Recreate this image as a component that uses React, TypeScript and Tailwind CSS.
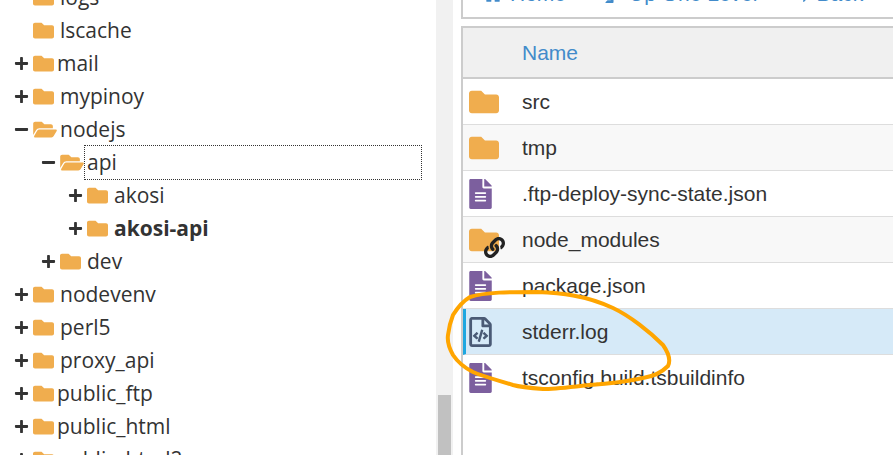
import React from 'react';
import { FaFolder, FaFolderOpen, FaPlus, FaMinus, FaFileAlt, FaRegFileCode, FaLink, FaHome, FaLevelUpAlt, FaReply } from 'react-icons/fa';

interface TreeRowProps {
  name: string;
  depth?: number;
  state?: 'open' | 'closed' | 'none';
  bold?: boolean;
  focused?: boolean;
  gap?: boolean;
}

const TreeRow: React.FC<TreeRowProps> = ({ name, depth = 0, state = 'closed', bold, focused, gap }) => {
  return (
    <div className="h-[33px] flex items-center" style={{ paddingLeft: 14 + depth * 27 }}>
      <span className="w-[19px] flex items-center text-[#333] shrink-0">
        {state === 'closed' && <FaPlus size={15} />}
        {state === 'open' && <FaMinus size={15} />}
      </span>
      {state === 'open' ? (
        <FaFolderOpen className="w-[24px] h-[21px] -mr-[3px] text-[#f0ad4e] shrink-0" />
      ) : (
        <FaFolder size={21} className="text-[#f0ad4e] shrink-0" />
      )}
      <span
        className={`ml-[3px] leading-[33px] whitespace-nowrap ${gap ? 'pl-[3px]' : ''} ${bold ? 'font-bold' : ''} ${
          focused ? 'h-[35px] w-[338px] border border-dotted border-[#333] pl-[2px]' : ''
        }`}
      >
        {name}
      </span>
    </div>
  );
};

const Tree = () => (
  <div className="w-[436px] shrink-0 -mt-[19px] font-['Open_Sans',sans-serif] text-[21px] text-[#333]">
    <TreeRow name="logs" state="none" gap />
    <TreeRow name="lscache" state="none" gap />
    <TreeRow name="mail" />
    <TreeRow name="mypinoy" gap />
    <TreeRow name="nodejs" state="open" gap />
    <TreeRow name="api" depth={1} state="open" focused />
    <TreeRow name="akosi" depth={2} gap />
    <TreeRow name="akosi-api" depth={2} gap bold />
    <TreeRow name="dev" depth={1} gap />
    <TreeRow name="nodevenv" gap />
    <TreeRow name="perl5" gap />
    <TreeRow name="proxy_api" gap />
    <TreeRow name="public_ftp" />
    <TreeRow name="public_html" />
    <TreeRow name="public_html2" />
  </div>
);

const rows = [
  { name: 'src', kind: 'folder' },
  { name: 'tmp', kind: 'folder', alt: true },
  { name: '.ftp-deploy-sync-state.json', kind: 'file' },
  { name: 'node_modules', kind: 'link', alt: true },
  { name: 'package.json', kind: 'file' },
  { name: 'stderr.log', kind: 'code', selected: true },
  { name: 'tsconfig.build.tsbuildinfo', kind: 'file', last: true },
];

const FileIcon = ({ kind }: { kind: string }) => {
  if (kind === 'file') return <FaFileAlt className="w-[23px] h-[30px] text-[#7c5f9e]" />;
  if (kind === 'code') return <FaRegFileCode className="w-[23px] h-[30px] text-[#4a5a75]" />;
  return (
    <span className="relative block">
      <FaFolder size={30} className="text-[#f0ad4e]" />
      {kind === 'link' && <FaLink size={21} className="absolute left-[15px] top-[12px] text-[#222]" />}
    </span>
  );
};

const App = () => {
  return (
    <div className="relative w-[893px] h-[455px] overflow-hidden bg-white flex">
      <Tree />
      <div className="w-[17px] shrink-0 bg-[#f1f1f1] flex flex-col justify-end px-[2px]">
        <div className="h-[60px] bg-[#c1c1c1]" />
      </div>
      <div className="flex-1 ml-[8px] font-['Liberation_Sans',sans-serif] text-[21px] text-[#333] min-w-0">
        <div className="h-[19px] border-l-2 border-b-2 border-[#ccc] overflow-hidden">
          <div className="flex items-center -mt-[18px] h-[24px] text-[#428bca] whitespace-nowrap">
            <FaHome size={20} className="ml-[20px]" />
            <span className="ml-[7px]">Home</span>
            <FaLevelUpAlt size={18} className="ml-[36px]" />
            <span className="ml-[9px]">Up One Level</span>
            <FaReply size={18} className="ml-[32px]" />
            <span className="ml-[9px]">Back</span>
          </div>
        </div>
        <div className="mt-[7px] border-l-2 border-[#ccc] h-[440px]">
          <div className="h-[53px] bg-[#f0f0f0] border-t-2 border-b-2 border-[#ccc] flex items-center pl-[59px] text-[#428bca]">
            Name
          </div>
          {rows.map((r) => (
            <div
              key={r.name}
              className={`h-[46px] flex items-center ${r.last ? '' : 'border-b border-[#ddd]'} ${
                r.selected ? 'bg-[#d6eaf8] border-l-[3px] border-l-[#1ea7e0] pl-[3px]' : r.alt ? 'bg-[#f8f8f8] pl-[6px]' : 'bg-white pl-[6px]'
              }`}
            >
              <span className="w-[53px] shrink-0"><FileIcon kind={r.kind} /></span>
              <span className="whitespace-nowrap">{r.name}</span>
            </div>
          ))}
        </div>
      </div>
      <svg className="absolute inset-0 pointer-events-none" width="893" height="455" fill="none">
        <path
          d="M470 297C485 292 510 292 537 292C560 293 585 295 613 308C630 316 650 332 663 345C670 355 670 362 668 366C660 374 650 377 643 378C625 382 605 384 590 385C570 387 555 389 543 389C530 388 520 387 513 385C497 380 485 377 473 372C463 367 457 361 453 355C449 348 447 342 448 335C449 327 451 320 453 315C458 307 463 301 470 297Z"
          stroke="#ffa500"
          strokeWidth="4"
          strokeLinecap="round"
        />
      </svg>
    </div>
  );
};

export default App;
